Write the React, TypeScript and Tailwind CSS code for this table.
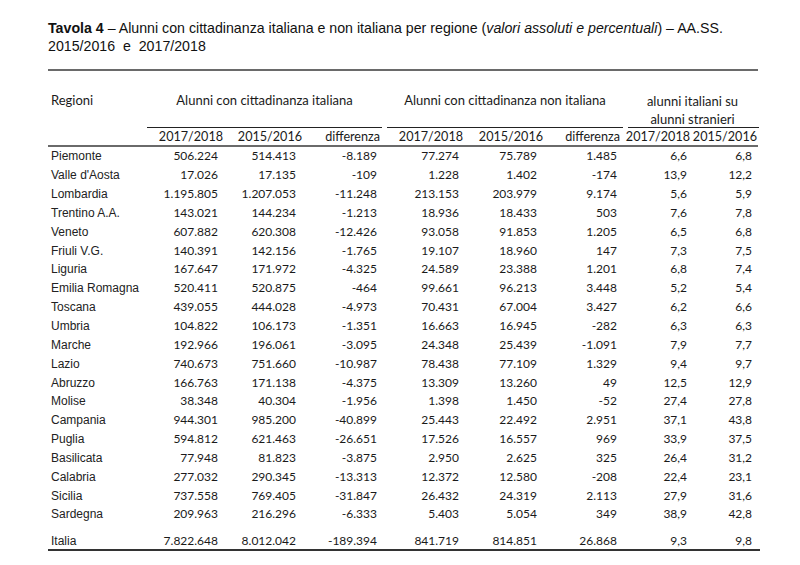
import React from "react"

const rows: [string, string, string, string, string, string, string, string, string][] = [
    ["Piemonte", "506.224", "514.413", "-8.189", "77.274", "75.789", "1.485", "6,6", "6,8"],
    ["Valle d'Aosta", "17.026", "17.135", "-109", "1.228", "1.402", "-174", "13,9", "12,2"],
    ["Lombardia", "1.195.805", "1.207.053", "-11.248", "213.153", "203.979", "9.174", "5,6", "5,9"],
    ["Trentino A.A.", "143.021", "144.234", "-1.213", "18.936", "18.433", "503", "7,6", "7,8"],
    ["Veneto", "607.882", "620.308", "-12.426", "93.058", "91.853", "1.205", "6,5", "6,8"],
    ["Friuli V.G.", "140.391", "142.156", "-1.765", "19.107", "18.960", "147", "7,3", "7,5"],
    ["Liguria", "167.647", "171.972", "-4.325", "24.589", "23.388", "1.201", "6,8", "7,4"],
    ["Emilia Romagna", "520.411", "520.875", "-464", "99.661", "96.213", "3.448", "5,2", "5,4"],
    ["Toscana", "439.055", "444.028", "-4.973", "70.431", "67.004", "3.427", "6,2", "6,6"],
    ["Umbria", "104.822", "106.173", "-1.351", "16.663", "16.945", "-282", "6,3", "6,3"],
    ["Marche", "192.966", "196.061", "-3.095", "24.348", "25.439", "-1.091", "7,9", "7,7"],
    ["Lazio", "740.673", "751.660", "-10.987", "78.438", "77.109", "1.329", "9,4", "9,7"],
    ["Abruzzo", "166.763", "171.138", "-4.375", "13.309", "13.260", "49", "12,5", "12,9"],
    ["Molise", "38.348", "40.304", "-1.956", "1.398", "1.450", "-52", "27,4", "27,8"],
    ["Campania", "944.301", "985.200", "-40.899", "25.443", "22.492", "2.951", "37,1", "43,8"],
    ["Puglia", "594.812", "621.463", "-26.651", "17.526", "16.557", "969", "33,9", "37,5"],
    ["Basilicata", "77.948", "81.823", "-3.875", "2.950", "2.625", "325", "26,4", "31,2"],
    ["Calabria", "277.032", "290.345", "-13.313", "12.372", "12.580", "-208", "22,4", "23,1"],
    ["Sicilia", "737.558", "769.405", "-31.847", "26.432", "24.319", "2.113", "27,9", "31,6"],
    ["Sardegna", "209.963", "216.296", "-6.333", "5.403", "5.054", "349", "38,9", "42,8"],
]

const totale = ["Italia", "7.822.648", "8.012.042", "-189.394", "841.719", "814.851", "26.868", "9,3", "9,8"]

// column template shared by sub-header and data rows
const cols = "grid grid-cols-[99px_76px_79px_78px_83px_80px_77px_70px_67px]"
// data numbers sit a few px left of the header labels
const pads = ["pr-[5px]", "pr-[6px]", "pr-[3px]", "pr-[4px]", "pr-[6px]", "pr-[3px]", "pr-[3px]", "pr-[5px]"]

const sans = "font-['Liberation_Sans',Arial,sans-serif]"
const num = "font-['Lato',sans-serif] text-[12px]"

function Row({ cells, className }: { cells: string[]; className: string }) {
    return (
        <div className={`${cols} ${className} items-center`}>
            <div className={`${sans} text-[12px] pl-[3px] text-[#222]`}>{cells[0]}</div>
            {cells.slice(1).map((c, i) => (
                <div key={i} className={`${num} text-right text-[#1a1a1a] ${pads[i]}`}>
                    {c}
                </div>
            ))}
        </div>
    )
}

export default function App() {
    return (
        <div className="w-[800px] h-[565px] bg-white overflow-hidden">
            <div className="pl-[48px] pt-[19px]">
                {/* Title */}
                <p className={`${sans} text-[14.2px] leading-[18px] text-[#111]`}>
                    <span className="font-bold">Tavola 4</span> – Alunni con cittadinanza italiana e non italiana per regione (
                    <span className="italic">valori assoluti e percentuali</span>) – AA.SS.
                    <br />
                    <span className="whitespace-pre">2015/2016  e  2017/2018</span>
                </p>

                <div className="w-[711px] mt-[14px]">
                    <div className="h-[2px] w-[710px] bg-[#6a6a6a]" />

                    {/* group headers */}
                    <div className="flex h-[57px] font-['Lato',sans-serif] text-[13px] leading-[18px] text-[#1a1a1a]">
                        <div className="w-[99px] pt-[20px] pl-[3px]">Regioni</div>
                        <div className="w-[235px] pt-[20px] text-center border-b-[1.5px] border-[#222]">
                            Alunni con cittadinanza italiana
                        </div>
                        <div className="w-[236px] ml-[5px] pt-[20px] text-center border-b-[1.5px] border-[#222]">
                            Alunni con cittadinanza non italiana
                        </div>
                        <div className="w-[131px] ml-[5px] pt-[21px] text-center border-b-[1.5px] border-[#222] pr-[2px]">
                            alunni italiani su
                            <br />
                            alunni stranieri
                        </div>
                    </div>

                    {/* sub-headers */}
                    <div className={`${cols} h-[17px] items-center font-['Lato',sans-serif] text-[12.6px] text-[#1a1a1a]`}>
                        <div />
                        {["2017/2018", "2015/2016", "differenza", "2017/2018", "2015/2016", "differenza", "2017/2018", "2015/2016"].map((h, i) => (
                            <div key={i} className="text-right whitespace-nowrap">
                                {h}
                            </div>
                        ))}
                    </div>
                    <div className="h-[2px] w-[710px] bg-[#6a6a6a]" />

                    {/* body */}
                    {rows.map((r) => (
                        <Row key={r[0]} cells={r} className="h-[18.85px]" />
                    ))}
                    <Row cells={totale} className="h-[17px] mt-[8px]" />
                    <div className="h-[2px] w-[712px] bg-[#333]" />
                </div>
            </div>
        </div>
    )
}
